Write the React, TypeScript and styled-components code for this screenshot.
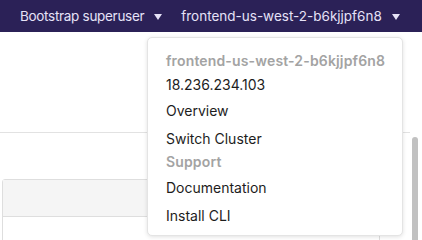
import React from "react";
import styled, { createGlobalStyle } from "styled-components";

const GlobalStyle = createGlobalStyle`
  html, body {
    margin: 0;
    padding: 0;
    background: #ffffff;
    font-family: Inter, "Noto Sans", sans-serif;
    overflow: hidden;
  }
`;

const Page = styled.div`
  position: relative;
  width: 422px;
  height: 240px;
  overflow: hidden;
`;

const TopBar = styled.div`
  height: 32px;
  background: #2b2157;
  display: flex;
  align-items: center;
  padding-left: 20px;
  gap: 19px;
  white-space: nowrap;
`;

const NavToggle = styled.div<{ $tracking?: number }>`
  display: flex;
  flex-shrink: 0;
  align-items: center;
  gap: 10px;
  color: #e6e2f7;
  font-size: 13.5px;
  letter-spacing: ${(p) => p.$tracking ?? 0}px;
`;

const Caret = styled.span`
  width: 0;
  height: 0;
  border-left: 4px solid transparent;
  border-right: 4px solid transparent;
  border-top: 6px solid #e6e2f7;
  margin-top: 1px;
`;

const Body = styled.div`
  display: flex;
`;

const Content = styled.div`
  flex: 1;
  display: flex;
  flex-direction: column;
`;

const Toolbar = styled.div`
  height: 100px;
  border-bottom: 1px solid #e2e2e2;
`;

const Card = styled.div`
  margin: 46px 30px 0 2px;
  border: 1px solid #dedede;
  border-radius: 3px 3px 0 0;
  height: 80px;
`;

const CardHeader = styled.div`
  height: 36px;
  background: #f5f5f5;
  border-bottom: 1px solid #dedede;
`;

const Scroll = styled.div`
  width: 8px;
  padding: 0 2px;
  display: flex;
  flex-direction: column;
`;

const Thumb = styled.div`
  margin-top: 105px;
  flex: 1;
  width: 6px;
  border-radius: 3px;
  background: #c1c1c1;
`;

const Menu = styled.div`
  position: absolute;
  top: 37px;
  left: 147px;
  width: 256px;
  height: 199px;
  box-sizing: border-box;
  background: #ffffff;
  border: 1px solid #e4e4e4;
  border-radius: 5px;
  box-shadow: 0 1px 4px rgba(0, 0, 0, 0.12);
  padding: 13px 0 0 18px;
  display: flex;
  flex-direction: column;
  white-space: nowrap;
`;

const MenuHeader = styled.div<{ $h: number }>`
  color: #a3a3a3;
  font-size: 14px;
  font-weight: 600;
  letter-spacing: 0.15px;
  line-height: 20px;
  height: ${(p) => p.$h}px;
`;

const MenuItem = styled.div<{ $h: number }>`
  color: #1d1d1d;
  font-size: 14px;
  line-height: 20px;
  height: ${(p) => p.$h}px;
  display: flex;
  align-items: center;
`;

export default function App() {
  return (
    <Page>
      <GlobalStyle />
      <TopBar>
        <NavToggle $tracking={-0.3}>
          Bootstrap superuser <Caret />
        </NavToggle>
        <NavToggle>
          frontend-us-west-2-b6kjjpf6n8 <Caret />
        </NavToggle>
      </TopBar>
      <Body>
        <Content>
          <Toolbar />
          <Card>
            <CardHeader />
          </Card>
        </Content>
        <Scroll>
          <Thumb />
        </Scroll>
      </Body>
      <Menu>
        <MenuHeader $h={23}>frontend-us-west-2-b6kjjpf6n8</MenuHeader>
        <MenuItem $h={22}>18.236.234.103</MenuItem>
        <MenuItem $h={29}>Overview</MenuItem>
        <MenuItem $h={27}>Switch Cluster</MenuItem>
        <MenuHeader $h={22}>Support</MenuHeader>
        <MenuItem $h={28}>Documentation</MenuItem>
        <MenuItem $h={28}>Install CLI</MenuItem>
      </Menu>
    </Page>
  );
}
